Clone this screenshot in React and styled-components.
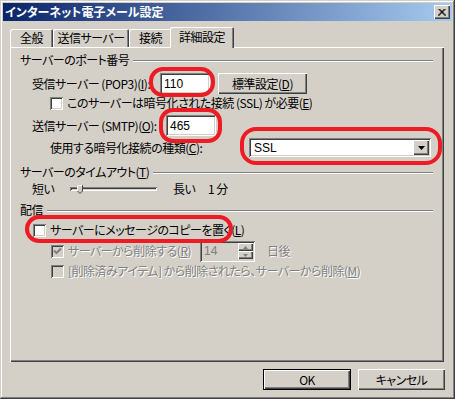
import React from "react";
import styled, { createGlobalStyle } from "styled-components";

const GlobalStyle = createGlobalStyle`
  html, body {
    margin: 0;
    padding: 0;
    background: #d4d0c8;
  }
  body {
    font-family: "Noto Sans CJK JP", "Liberation Sans", sans-serif;
    font-size: 12px;
    font-feature-settings: "palt";
    letter-spacing: -0.5px;
    color: #000;
  }
`;

const raised = `
  background: #d4d0c8;
  box-shadow: inset 1px 1px #fff, inset -1px -1px #404040, inset -2px -2px #808080;
`;

const sunken = `
  box-shadow: inset 1px 1px #808080, inset -1px -1px #fff, inset 2px 2px #404040, inset -2px -2px #d4d0c8;
`;

const Window = styled.div`
  position: relative;
  width: 455px;
  height: 399px;
  box-sizing: border-box;
  padding: 3px;
  background: #d4d0c8;
  box-shadow: inset -1px -1px #404040, inset 1px 1px #d4d0c8, inset -2px -2px #808080, inset 2px 2px #fff;
  display: flex;
  flex-direction: column;
`;

const TitleBar = styled.div`
  height: 18px;
  display: flex;
  align-items: center;
  justify-content: space-between;
  padding: 0 2px;
  background: linear-gradient(to right, #0a246a, #a6caf0);
  color: #fff;
  font-weight: bold;
  font-size: 12px;
  letter-spacing: 0;
  line-height: 18px;
`;

const CloseButton = styled.div`
  ${raised}
  width: 16px;
  height: 14px;
  display: flex;
  align-items: center;
  justify-content: center;
`;

const TabRow = styled.div`
  position: relative;
  z-index: 1;
  display: flex;
  align-items: flex-end;
  height: 21px;
  margin-top: 6px;
  padding-left: 7px;
`;

const Tab = styled.div`
  box-sizing: border-box;
  width: ${p => p.$w}px;
  height: ${p => (p.$active ? 21 : 18)}px;
  margin: ${p => (p.$active ? "0 -2px 0 -2px" : "0 0 1px 0")};
  padding-top: ${p => (p.$active ? 3 : 2)}px;
  text-align: center;
  line-height: 14px;
  background: #d4d0c8;
  border-radius: 2px 2px 0 0;
  box-shadow: inset 1px 1px #fff, inset -1px 0 #404040, inset -2px 0 #808080;
`;

const Panel = styled.div`
  box-sizing: border-box;
  width: 434px;
  height: 315px;
  margin: -1px 0 0 7px;
  padding: 6px 11px 0 10px;
  background: #d4d0c8;
  box-shadow: inset 1px 1px #fff, inset -1px -1px #404040, inset -2px -2px #808080;
  display: flex;
  flex-direction: column;
`;

const Row = styled.div`
  display: flex;
  align-items: center;
  height: ${p => p.$h || 14}px;
  margin-top: ${p => p.$mt || 0}px;
  padding-left: ${p => p.$indent || 0}px;
  line-height: 14px;
  white-space: nowrap;
`;

const GroupLine = styled.div`
  flex: 1;
  margin: 2px 0 0 4px;
  border-top: 1px solid #808080;
  border-bottom: 1px solid #fff;
`;

const Label = styled.span`
  display: inline-block;
  width: ${p => (p.$w ? `${p.$w}px` : "auto")};
  margin-left: ${p => p.$ml || 0}px;
  color: ${p => (p.$disabled ? "#808080" : "#000")};
  text-shadow: ${p => (p.$disabled ? "1px 1px 0 #fff" : "none")};
`;

const TextBox = styled.div`
  box-sizing: border-box;
  width: ${p => p.$w}px;
  height: ${p => p.$h || 21}px;
  padding: 0 ${p => (p.$spin ? 2 : 4)}px 0 4px;
  display: flex;
  align-items: center;
  justify-content: space-between;
  background: ${p => (p.$disabled ? "#d4d0c8" : "#fff")};
  color: ${p => (p.$disabled ? "#808080" : "#000")};
  font-family: "Liberation Sans", "Noto Sans CJK JP", sans-serif;
  letter-spacing: 0;
  ${sunken}
`;

const PushButton = styled.div`
  ${raised}
  box-sizing: border-box;
  width: ${p => p.$w}px;
  height: 21px;
  margin-left: ${p => p.$ml || 0}px;
  display: flex;
  align-items: center;
  justify-content: center;
  ${p =>
    p.$default &&
    `box-shadow: inset 0 0 0 1px #000, inset 2px 2px #fff, inset -2px -2px #404040, inset -3px -3px #808080;`}
`;

const CheckBox = styled.div`
  box-sizing: border-box;
  flex: none;
  width: 13px;
  height: 13px;
  background: ${p => (p.$disabled ? "#d4d0c8" : "#fff")};
  ${sunken}
  display: flex;
  align-items: center;
  justify-content: center;
`;

const Combo = styled.div`
  box-sizing: border-box;
  width: 182px;
  height: 19px;
  padding: 2px 2px 2px 5px;
  display: flex;
  align-items: center;
  justify-content: space-between;
  background: #fff;
  font-family: "Liberation Sans", sans-serif;
  letter-spacing: 0;
  ${sunken}
`;

const DropButton = styled.div`
  ${raised}
  width: 16px;
  height: 15px;
  display: flex;
  align-items: center;
  justify-content: center;
`;

const Track = styled.div`
  position: relative;
  width: 87px;
  height: 4px;
  ${sunken}
`;

const Thumb = styled.svg`
  position: absolute;
  left: 7px;
  top: -2px;
`;

const Spin = styled.div`
  display: flex;
  flex-direction: column;
`;

const SpinButton = styled.div`
  ${raised}
  width: 15px;
  height: 8px;
  display: flex;
  align-items: center;
  justify-content: center;
`;

const ButtonRow = styled.div`
  display: flex;
  justify-content: flex-end;
  gap: 7px;
  margin-top: 7px;
  padding-right: 7px;
`;

const Oval = styled.div`
  position: absolute;
  left: ${p => p.$x}px;
  top: ${p => p.$y}px;
  width: ${p => p.$w}px;
  height: ${p => p.$h}px;
  box-sizing: border-box;
  border: 4px solid #ed1c24;
  border-radius: ${p => p.$r || 14}px;
  pointer-events: none;
`;

const Check = ({ color = "#000" }) => (
  <svg width="9" height="9" viewBox="0 0 9 9">
    <path d="M1 3.5 L3.5 6 L8 1.5" stroke={color} strokeWidth="2" fill="none" />
  </svg>
);

const GroupHeader = ({ mt, children }) => (
  <Row $mt={mt}>
    <span>{children}</span>
    <GroupLine />
  </Row>
);

const App = () => (
  <>
    <GlobalStyle />
    <Window>
      <TitleBar>
        <span>インターネット電子メール設定</span>
        <CloseButton>
          <svg width="8" height="7" viewBox="0 0 8 7">
            <path d="M0.5 0 L7.5 7 M7.5 0 L0.5 7 M1.5 0 L8 6.5 M6.5 0 L0 6.5" stroke="#000" strokeWidth="1" />
          </svg>
        </CloseButton>
      </TitleBar>

      <TabRow>
        <Tab $w={43}>全般</Tab>
        <Tab $w={76}>送信サーバー</Tab>
        <Tab $w={43}>接続</Tab>
        <Tab $w={64} $active>詳細設定</Tab>
      </TabRow>

      <Panel>
        <GroupHeader>サーバーのポート番号</GroupHeader>

        <Row $h={21} $mt={6} $indent={12}>
          <Label $w={128}>受信サーバー (POP3)(<u>I</u>):</Label>
          <TextBox $w={50}>110</TextBox>
          <PushButton $w={89} $ml={8}>標準設定(<u>D</u>)</PushButton>
        </Row>

        <Row $mt={2} $indent={30}>
          <CheckBox />
          <Label $ml={4}>このサーバーは暗号化された接続 (SSL) が必要(<u>E</u>)</Label>
        </Row>

        <Row $h={21} $mt={5} $indent={12}>
          <Label $w={134}>送信サーバー (SMTP)(<u>O</u>):</Label>
          <TextBox $w={50}>465</TextBox>
        </Row>

        <Row $h={19} $mt={2} $indent={30}>
          <Label $w={199}>使用する暗号化接続の種類(<u>C</u>):</Label>
          <Combo>
            <span>SSL</span>
            <DropButton>
              <svg width="7" height="4" viewBox="0 0 7 4">
                <path d="M0 0 H7 L3.5 4 Z" fill="#000" />
              </svg>
            </DropButton>
          </Combo>
        </Row>

        <GroupHeader mt={8}>
          サーバーのタイムアウト(<u>T</u>)
        </GroupHeader>

        <Row $mt={3} $indent={12}>
          <Label $w={38}>短い</Label>
          <Track>
            <Thumb width="6" height="9" viewBox="0 0 6 9">
              <path d="M0.5 0.5 H5.5 V6 L3 8.5 L0.5 6 Z" fill="#d4d0c8" stroke="#404040" strokeWidth="1" />
              <path d="M0.5 6 V0.5 H5" stroke="#fff" strokeWidth="1" fill="none" />
            </Thumb>
          </Track>
          <Label $w={35} $ml={16}>長い</Label>
          <Label>1 分</Label>
        </Row>

        <GroupHeader mt={7}>配信</GroupHeader>

        <Row $mt={6} $indent={13}>
          <CheckBox />
          <Label $ml={4}>サーバーにメッセージのコピーを置く(<u>L</u>)</Label>
        </Row>

        <Row $h={22} $mt={3} $indent={31}>
          <CheckBox $disabled>
            <Check color="#808080" />
          </CheckBox>
          <Label $w={132} $ml={4} $disabled>サーバーから削除する(<u>R</u>)</Label>
          <TextBox $w={55} $disabled $spin>
            <span>14</span>
            <Spin>
              <SpinButton>
                <svg width="5" height="3" viewBox="0 0 5 3"><path d="M0 3 H5 L2.5 0 Z" fill="#808080" /></svg>
              </SpinButton>
              <SpinButton>
                <svg width="5" height="3" viewBox="0 0 5 3"><path d="M0 0 H5 L2.5 3 Z" fill="#808080" /></svg>
              </SpinButton>
            </Spin>
          </TextBox>
          <Label $ml={12} $disabled>日後</Label>
        </Row>

        <Row $mt={2} $indent={31}>
          <CheckBox $disabled />
          <Label $ml={4} $disabled>[削除済みアイテム] から削除されたら、サーバーから削除(<u>M</u>)</Label>
        </Row>
      </Panel>

      <ButtonRow>
        <PushButton $w={88} $default>OK</PushButton>
        <PushButton $w={87}>キャンセル</PushButton>
      </ButtonRow>

      <Oval $x={149} $y={67} $w={66} $h={30} />
      <Oval $x={159} $y={108} $w={63} $h={35} />
      <Oval $x={240} $y={127} $w={202} $h={38} $r={16} />
      <Oval $x={25} $y={215} $w={208} $h={28} />
    </Window>
  </>
);

export default App;
